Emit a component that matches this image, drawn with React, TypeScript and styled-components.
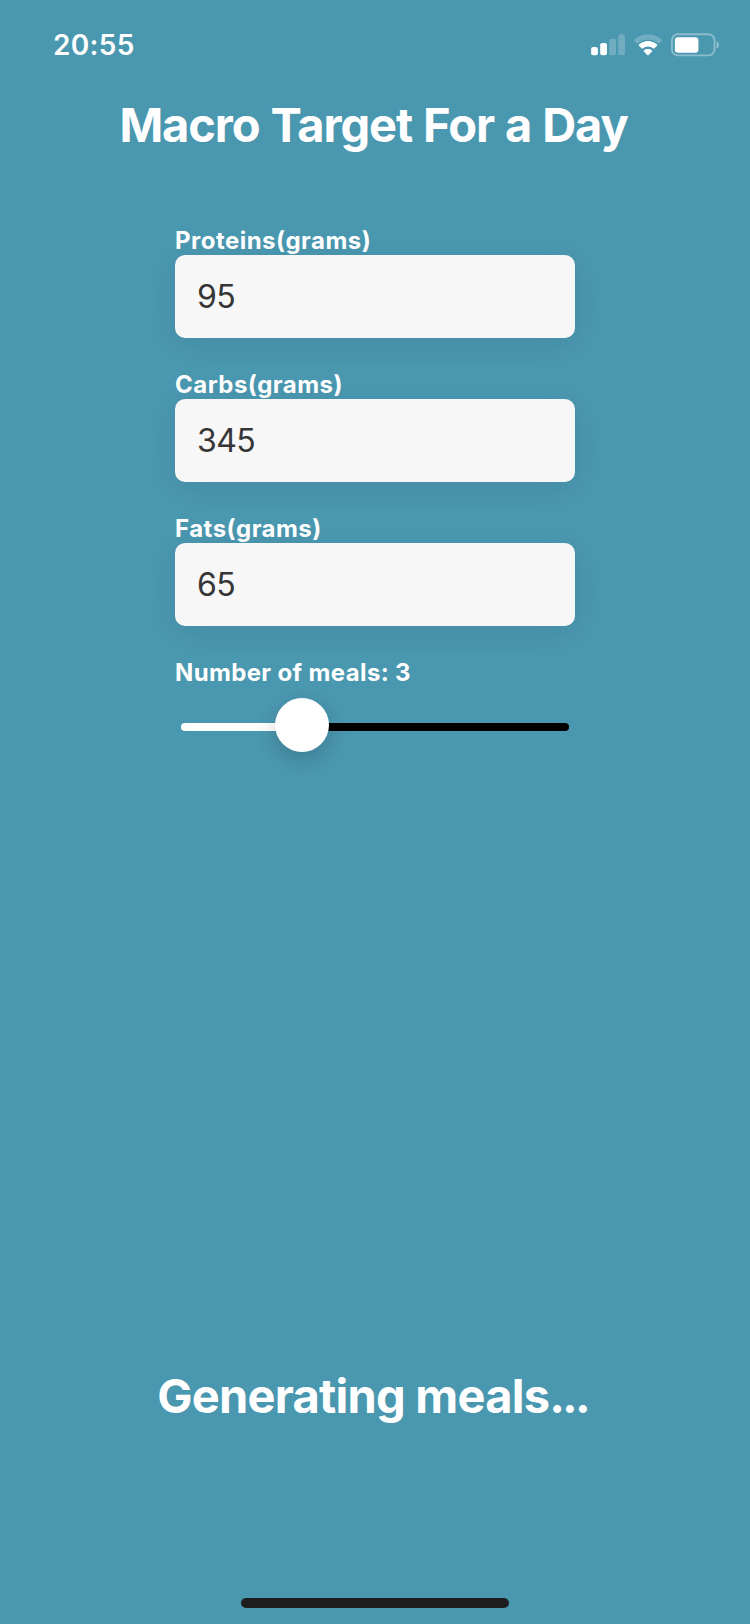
import React, { useState } from 'react';
import styled, { createGlobalStyle } from 'styled-components';

const GlobalStyle = createGlobalStyle`
  *, *::before, *::after { box-sizing: border-box; }
  body {
    margin: 0;
    background: #4a97b0;
    color: #fff;
    font-family: Inter, 'Liberation Sans', sans-serif;
  }
`;

const Screen = styled.div`
  display: flex;
  flex-direction: column;
  align-items: center;
  width: 750px;
  height: 1624px;
  background: #4a97b0;
`;

const StatusBar = styled.header`
  display: flex;
  align-items: flex-start;
  justify-content: space-between;
  width: 100%;
  height: 96px;
  padding: 28px 30px 0 53px;
`;

const Clock = styled.time`
  font-size: 28px;
  font-weight: 600;
  line-height: 34px;
  letter-spacing: 0.3px;
`;

const StatusIcons = styled.svg`
  display: block;
  width: 130px;
  height: 24px;
  margin-top: 5px;
`;

const Heading = styled.h1`
  margin: 0 3px 0 0;
  font-size: 47px;
  font-weight: 700;
  line-height: 57px;
  letter-spacing: -1.1px;
  word-spacing: 1px;
  white-space: nowrap;
`;

const Form = styled.form`
  display: flex;
  flex-direction: column;
  gap: 32px;
  width: 400px;
  margin-top: 73px;
`;

const Field = styled.div`
  display: flex;
  flex-direction: column;
`;

const Label = styled.label<{ $tracking?: number }>`
  font-size: 24px;
  font-weight: 700;
  line-height: 29px;
  letter-spacing: ${({ $tracking = 0.48 }) => $tracking}px;
  white-space: nowrap;
`;

const NumberInput = styled.input`
  width: 100%;
  height: 83px;
  padding: 0 22px;
  border: 0;
  border-radius: 10px;
  outline: 0;
  background: #f7f7f7;
  box-shadow: 0 6px 28px rgba(0, 0, 0, 0.08);
  color: #363636;
  font-family: inherit;
  font-size: 32px;
  letter-spacing: -0.6px;
`;

const Slider = styled.div`
  display: flex;
  align-items: center;
  height: 54px;
  margin: 11px 6px 0;
`;

const Track = styled.div<{ $filled?: boolean }>`
  flex: ${({ $filled }) => ($filled ? '0 0 106px' : '1')};
  height: 8px;
  margin: 4px 0 0 ${({ $filled }) => ($filled ? '0' : '-12px')};
  border-radius: 4px;
  background: ${({ $filled }) => ($filled ? '#fff' : '#000')};
`;

const Thumb = styled.div`
  position: relative;
  flex: none;
  width: 54px;
  height: 54px;
  margin-left: -12px;
  border-radius: 50%;
  background: #fff;
  box-shadow: 0 7px 20px rgba(0, 0, 0, 0.18);
`;

const Progress = styled(Heading).attrs({ as: 'p' })`
  margin: auto 5px 174px 0;
  letter-spacing: -0.75px;
  word-spacing: 0;
`;

const Dots = styled.span`
  letter-spacing: -2.9px;
`;

const HomeIndicator = styled.div`
  flex: none;
  width: 268px;
  height: 10px;
  margin-bottom: 16px;
  border-radius: 5px;
  background: #1e1e1e;
`;

const StatusGlyphs = () => (
  <StatusIcons viewBox="590 33 130 24" fill="#fff" aria-hidden="true">
    <rect x="591.1" y="47" width="6.8" height="8.3" rx="2" />
    <rect x="600.2" y="43" width="6.8" height="12.3" rx="2" />
    <rect x="609.2" y="38.8" width="6.8" height="16.5" rx="2" opacity="0.22" />
    <rect x="618.2" y="34.3" width="6.8" height="21" rx="2" opacity="0.22" />
    <path
      opacity="0.22"
      d="M648 34.3c5.3 0 10.2 2 13.9 5.5.3.3.3.8 0 1.1l-2.7 2.7c-.3.3-.8.3-1.1 0a14.8 14.8 0 0 0-20.2 0c-.3.3-.8.3-1.1 0l-2.7-2.7a.8.8 0 0 1 0-1.1A20 20 0 0 1 648 34.3z"
    />
    <path d="M648 41.1c3.4 0 6.6 1.3 9 3.5.4.3.4.8 0 1.1l-2.7 2.7c-.3.3-.8.3-1.1 0a7.9 7.9 0 0 0-10.4 0c-.3.3-.8.3-1.1 0l-2.7-2.7a.8.8 0 0 1 0-1.1 13.4 13.4 0 0 1 9-3.5z" />
    <path d="M648 49.1c1.5 0 2.9.5 4 1.3.4.3.4.8.1 1.1l-3.5 3.5c-.4.4-.9.4-1.3 0l-3.5-3.5a.8.8 0 0 1 .1-1.1c1.2-.8 2.6-1.3 4.1-1.3z" />
    <rect x="671.9" y="34.2" width="42.6" height="21.2" rx="6" fill="none" stroke="#fff" strokeWidth="1.9" opacity="0.36" />
    <rect x="674.9" y="37.2" width="23.5" height="15.5" rx="3" />
    <path d="M716.5 41.3v7.2c1.6-.6 2.5-1.9 2.5-3.6s-.9-3-2.5-3.6z" opacity="0.4" />
  </StatusIcons>
);

const macros = [
  { id: 'proteins', label: 'Proteins(grams)', value: '95' },
  { id: 'carbs', label: 'Carbs(grams)', value: '345' },
  { id: 'fats', label: 'Fats(grams)', value: '65' },
];

export default function App() {
  const [values, setValues] = useState<Record<string, string>>(
    Object.fromEntries(macros.map(({ id, value }) => [id, value])),
  );

  return (
    <Screen>
      <GlobalStyle />
      <StatusBar>
        <Clock>20:55</Clock>
        <StatusGlyphs />
      </StatusBar>
      <Heading>Macro Target For a Day</Heading>
      <Form>
        {macros.map(({ id, label }) => (
          <Field key={id}>
            <Label htmlFor={id}>{label}</Label>
            <NumberInput
              id={id}
              inputMode="numeric"
              value={values[id]}
              onChange={(e) => setValues({ ...values, [id]: e.target.value })}
            />
          </Field>
        ))}
        <Field>
          <Label as="span" $tracking={0.36}>Number of meals: 3</Label>
          <Slider role="slider" aria-label="Number of meals" aria-valuenow={3}>
            <Track $filled />
            <Thumb />
            <Track />
          </Slider>
        </Field>
      </Form>
      <Progress>
        Generating meals<Dots>...</Dots>
      </Progress>
      <HomeIndicator />
    </Screen>
  );
}
